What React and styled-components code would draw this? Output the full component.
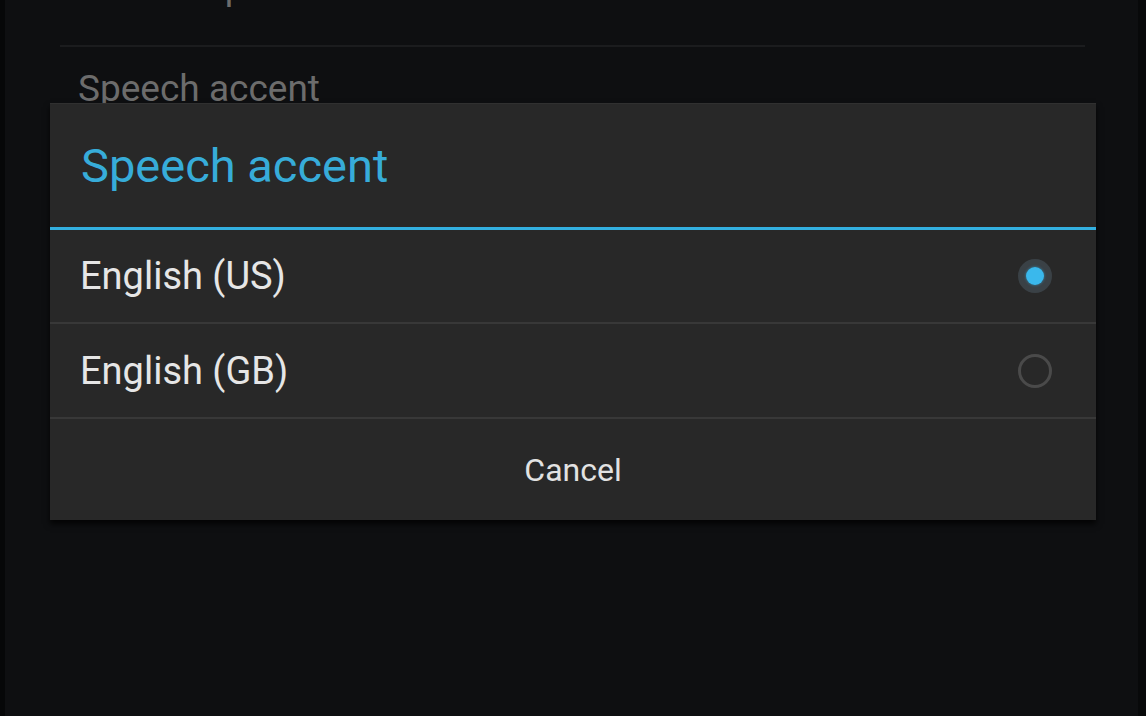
import React, { useState } from 'react';
import styled, { createGlobalStyle } from 'styled-components';

const GlobalStyle = createGlobalStyle`
  html, body {
    margin: 0;
    padding: 0;
    background: #0e0f11;
  }
  * {
    box-sizing: border-box;
  }
`;

const Screen = styled.div`
  position: relative;
  width: 1146px;
  height: 716px;
  overflow: hidden;
  font-family: Roboto, 'Noto Sans', sans-serif;
  background: linear-gradient(
    to right,
    #060708 0 5px,
    #0e0f11 5px calc(100% - 8px),
    #08090a calc(100% - 8px)
  );
`;

const SettingsList = styled.div`
  display: flex;
  flex-direction: column;
  padding: 0 61px 0 60px;
  margin-top: -46px;
`;

const SettingItem = styled.div`
  display: flex;
  align-items: flex-end;
  height: ${(p) => p.height}px;
  padding: 0 0 ${(p) => p.bottom}px 18px;
  border-bottom: ${(p) => (p.last ? 'none' : '2px solid #1b1c1e')};
  color: #6c6c6c;
  font-size: 37px;
  line-height: 1;
`;

const Dialog = styled.div`
  position: absolute;
  left: 50px;
  top: 103px;
  width: 1046px;
  display: flex;
  flex-direction: column;
  background: #282828;
  border-top: 1px solid #303030;
  box-shadow: 0 4px 6px rgba(0, 0, 0, 0.8);
`;

const DialogTitle = styled.div`
  display: flex;
  align-items: center;
  height: 126px;
  padding-left: 31px;
  color: #37acd9;
  font-size: 47px;
  border-bottom: 3px solid #33b0e0;
`;

const OptionRow = styled.label`
  display: flex;
  align-items: center;
  justify-content: space-between;
  height: ${(p) => p.height}px;
  padding: 0 44px 0 30px;
  border-bottom: 2px solid #383838;
  color: #e6e6e6;
  font-size: 38px;
  cursor: pointer;
`;

const Radio = styled.span`
  display: flex;
  align-items: center;
  justify-content: center;
  width: 34px;
  height: 34px;
  border-radius: 50%;
  border: ${(p) => (p.checked ? '8px solid #3a4146' : '3px solid #4a4a4a')};

  &::after {
    content: '';
    width: 18px;
    height: 18px;
    border-radius: 50%;
    background: #3ab8ec;
    box-shadow: 0 0 3px rgba(58, 184, 236, 0.6);
    display: ${(p) => (p.checked ? 'block' : 'none')};
  }
`;

const CancelButton = styled.button`
  height: 101px;
  border: none;
  background: transparent;
  color: #e2e2e2;
  font-family: inherit;
  font-size: 32px;
  cursor: pointer;
`;

const options = [
  { id: 'us', label: 'English (US)', height: 94 },
  { id: 'gb', label: 'English (GB)', height: 95 },
];

export default function App() {
  const [accent, setAccent] = useState('us');

  return (
    <>
      <GlobalStyle />
      <Screen>
        <SettingsList>
          <SettingItem height={93} bottom={40}>Default speech</SettingItem>
          <SettingItem height={80} bottom={20} last>Speech accent</SettingItem>
        </SettingsList>

        <Dialog>
          <DialogTitle>Speech accent</DialogTitle>
          {options.map((o) => (
            <OptionRow key={o.id} height={o.height} onClick={() => setAccent(o.id)}>
              {o.label}
              <Radio checked={accent === o.id} />
            </OptionRow>
          ))}
          <CancelButton>Cancel</CancelButton>
        </Dialog>
      </Screen>
    </>
  );
}
